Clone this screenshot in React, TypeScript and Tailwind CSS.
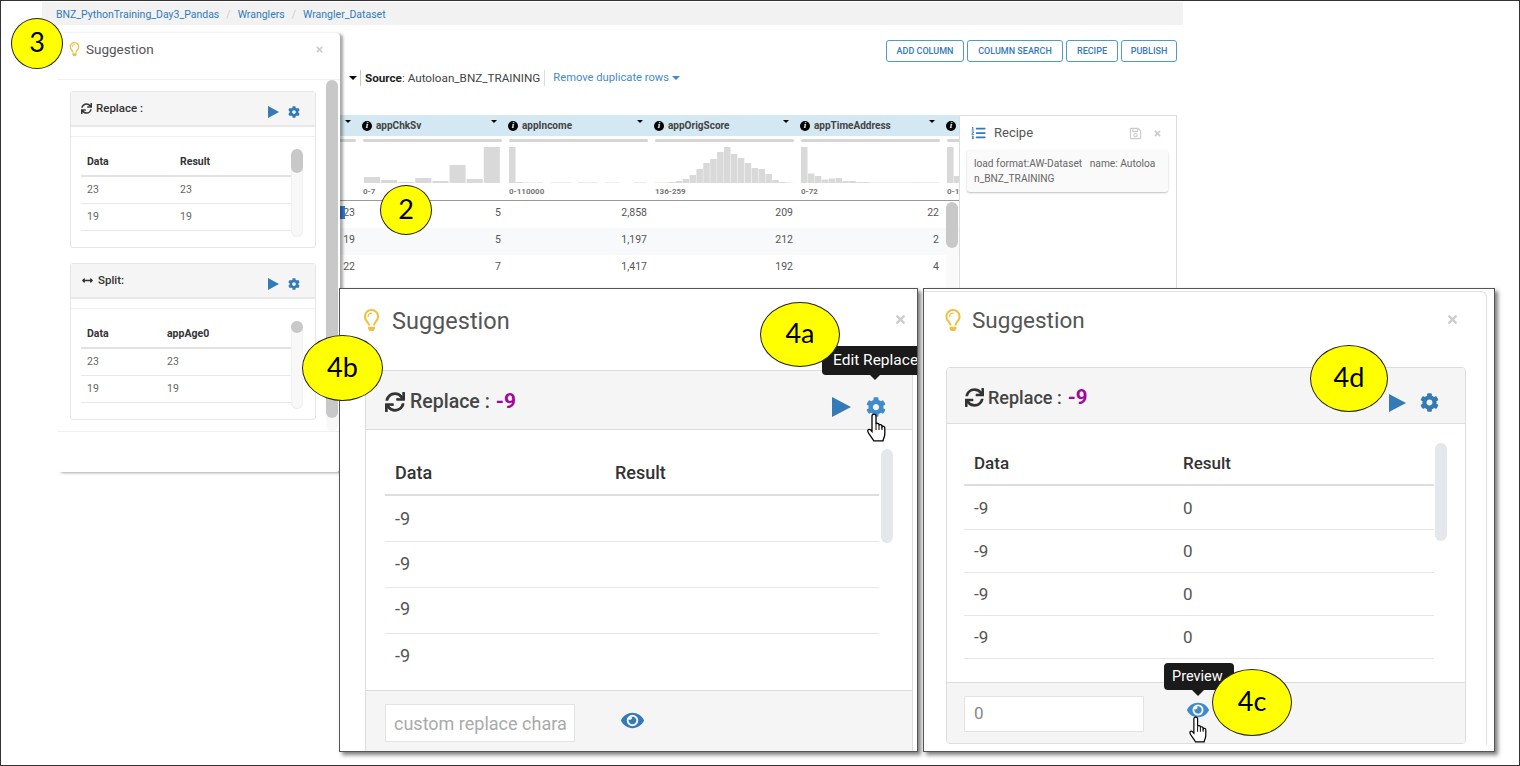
import { FaArrowsAltH, FaCog, FaEye, FaListOl, FaRegLightbulb, FaRegSave, FaSync, FaTimes } from "react-icons/fa"

const columns = [
  { name: "appAge0", range: "", values: ["23", "19", "22"], bars: [] as number[], barWidth: 7 },
  { name: "appChkSv", range: "0-7", values: ["5", "5", "7"], bars: [6, 3, 1, 5, 2, 18, 4, 36], barWidth: 17.1 },
  { name: "appIncome", range: "0-110000", values: ["2,858", "1,197", "1,417"], bars: [36, 1, 0.5, 0.5, 0.5, 0, 0.5, 0.5, 0.5, 0, 0.5, 0.5, 0.5, 0, 0.5, 0.5, 0, 0, 0.5, 0.5], barWidth: 6.9 },
  { name: "appOrigScore", range: "136-259", values: ["209", "212", "192"], bars: [0.5, 0.5, 1, 2, 4, 8, 14, 20, 24, 31, 36, 29, 25, 20, 15, 14, 9, 3, 1, 0.5], barWidth: 6.9 },
  { name: "appTimeAddress", range: "0-72", values: ["22", "2", "4"], bars: [36, 9.5, 7, 3.5, 4.5, 5, 2, 2, 1, 1, 0.5, 0.5, 0.5, 0.5, 0.5, 0.5, 0.5, 0.5, 0.5, 0.5], barWidth: 6.9 },
  { name: "", range: "0-1", values: ["", "", ""], bars: [36, 7], barWidth: 7 },
]

const actions = [
  { label: "ADD COLUMN", width: "w-[78px]" },
  { label: "COLUMN SEARCH", width: "w-[96px]" },
  { label: "RECIPE", width: "w-[52px]" },
  { label: "PUBLISH", width: "w-[56px]" },
]

function Callout({ label, className }: { label: string; className: string }) {
  return (
    <div
      className={`absolute z-30 flex items-center justify-center rounded-[50%] border border-[#222] bg-[#ffff00] pb-[2px] font-['Lato',sans-serif] text-[27px] text-black ${className}`}
    >
      {label}
    </div>
  )
}

function Caret({ className = "" }: { className?: string }) {
  return <span className={`inline-block h-0 w-0 border-x-[3px] border-t-[3px] border-x-transparent border-t-black ${className}`} />
}

function Play({ className }: { className: string }) {
  return (
    <svg viewBox="0 0 18 20" preserveAspectRatio="none" className={className}>
      <polygon points="0,0 18,10 0,20" fill="#337ab7" />
    </svg>
  )
}

function Hand({ className }: { className: string }) {
  return (
    <svg viewBox="0 0 22 29" className={className}>
      <path
        d="M7.5 1.2c1.2 0 2 .9 2 2.1V11c.4-1 2.6-1 3 .2v1c.4-1 2.6-.8 3 .5v1c.5-.9 2.8-.6 2.8 1V21c0 2.800-1.400 4.300-1.800 6.800H7.200C6 25 2 21 1.300 18.300c-.4-1.600 1.300-2.600 2.600-1.500l1.600 1.700V3.300c0-1.200.8-2.100 2-2.100z"
        fill="#fff"
        stroke="#000"
        strokeWidth="1.300"
      />
      <path d="M9.500 11v6M12.500 12v5M15.500 13.500V17" stroke="#000" strokeWidth="1" fill="none" />
    </svg>
  )
}

function Histogram({ bars, barWidth }: { bars: number[]; barWidth: number }) {
  const wide = barWidth > 10
  return (
    <svg width="140" height="37" className="block overflow-visible">
      {bars.map((h, i) => (
        <rect key={i} x={i * barWidth + (wide ? 1 : 0)} y={37 - h} width={barWidth - (wide ? 1 : 0.4)} height={h} fill="#d9d9d9" />
      ))}
    </svg>
  )
}

function AppPage() {
  return (
    <div className="ml-[41px] w-[1141px] pt-px">
      <div className="flex h-[23px] items-center gap-[7px] bg-[#f2f2f2] pt-[2px] pl-[14px] text-[10.500px] text-[#337ab7]">
        <span>BNZ_PythonTraining_Day3_Pandas</span>
        <span className="text-[#ccc]">/</span>
        <span>Wranglers</span>
        <span className="text-[#ccc]">/</span>
        <span>Wrangler_Dataset</span>
      </div>

      <div className="mt-[15px] flex justify-end gap-[3px] pr-[6px]">
        {actions.map((action) => (
          <button
            key={action.label}
            className={`h-[22px] rounded-[3px] border border-[#4f9bc4] pt-[1px] text-[9px] font-medium text-[#337ab7] ${action.width}`}
          >
            {action.label}
          </button>
        ))}
      </div>

      <div className="mt-[8px] flex h-[16px] items-center pl-[307px] text-[11.700px] text-[#444]">
        <Caret className="mr-[3px] border-x-[4px] border-t-[4px]" />
        <span className="border-l border-[#ccc] pl-[4px] leading-[16px]">
          <b className="font-bold text-[#222]">Source</b>: Autoloan_BNZ_TRAINING
        </span>
        <span className="ml-[4px] border-l border-[#ddd] pl-[8px] text-[11.200px] leading-[16px] text-[#428bca]">Remove duplicate rows</span>
        <span className="ml-[3px] inline-block h-0 w-0 border-x-[4px] border-t-[4px] border-x-transparent border-t-[#428bca]" />
      </div>

      <div className="mt-[29px] flex">
        <div className="relative ml-[174px] w-[743px] overflow-hidden">
          <div className="flex h-[21px] w-[876px] bg-[#d3e8f3]">
            {columns.map((col) => (
              <div key={col.range + col.name} className="relative flex w-[146px] shrink-0 items-center text-[10px] font-bold text-[#444]">
                <span className="mr-[4px] flex h-[10px] w-[10px] items-center justify-center rounded-full bg-black font-['Liberation_Serif',serif] text-[9px] font-bold text-white italic">
                  i
                </span>
                {col.name}
                <Caret className="absolute top-[5px] right-[11px]" />
              </div>
            ))}
          </div>
          <div className="flex h-[65px] w-[876px] border-b border-[#999]">
            {columns.map((col) => (
              <div key={col.range + col.name} className="w-[146px] shrink-0 pt-[3px] pr-[6px] pl-[1px]">
                <div className="h-[3px] rounded-full bg-[#d5d5d5]" />
                <div className="mt-[4px] h-[37px]">
                  <Histogram bars={col.bars} barWidth={col.barWidth} />
                </div>
                <div className="mt-[3px] text-[8px] leading-[12px] font-bold text-[#777]">{col.range}</div>
              </div>
            ))}
          </div>
          {[0, 1, 2].map((row) => (
            <div key={row} className={`flex h-[27px] w-[876px] items-start pt-[5px] text-[10.500px] leading-[14px] text-[#555] ${row === 1 ? "bg-[#f8f9fb]" : ""}`}>
              {columns.map((col) => (
                <div key={col.range + col.name} className="w-[146px] shrink-0 pr-[7px] text-right">
                  {col.values[row]}
                </div>
              ))}
            </div>
          ))}
          <div className="h-[10px]" />
          <div className="absolute top-[91px] left-[124px] h-[13px] w-[5px] bg-[#3a7bd5]" />
          <div className="absolute top-[87px] right-[1px] bottom-0 w-[12px] rounded-full bg-[#fafafa]" />
          <div className="absolute top-[87px] right-[1px] h-[46px] w-[12px] rounded-full bg-[#c8c8c8]" />
        </div>

        <div className="h-[190px] w-[218px] border border-[#ddd] bg-white pr-[8px] pl-[7px]">
          <div className="flex h-[34px] items-center pl-[4px]">
            <FaListOl className="h-[14px] w-[15px] text-[#337ab7]" />
            <span className="ml-[8px] text-[13px] text-[#555]">Recipe</span>
            <FaRegSave className="ml-auto h-[13px] w-[13px] text-[#ccc]" />
            <FaTimes className="mr-[6px] ml-[11px] h-[9px] w-[9px] text-[#ccc]" />
          </div>
          <div className="rounded-[3px] bg-[#fafafa] px-[7px] py-[6px] text-[10.200px] leading-[15px] text-[#666] shadow-[0_1px_2px_rgba(0,0,0,0.25)]">
            load format:AW-Dataset &nbsp; name: Autoloa
            <br />
            n_BNZ_TRAINING
          </div>
        </div>
      </div>
    </div>
  )
}

function MiniCard({
  title,
  icon,
  second,
  secondClass,
  thumbClass,
  values,
}: {
  title: string
  icon: React.ReactNode
  second: string
  secondClass: string
  thumbClass: string
  values: string[]
}) {
  return (
    <div className="relative h-[157px] rounded-[3px] border border-[#e6e6e6]">
      <div className="flex h-[35px] items-center border-b-2 border-[#e8e8e8] bg-[#f5f5f5] pl-[10px] text-[11.500px] font-medium text-[#333]">
        <span className="flex items-center">
          {icon}
          <span className="ml-[4px]">{title}</span>
        </span>
        <Play className="mt-[6px] ml-auto h-[12px] w-[11px]" />
        <FaCog className="mt-[6px] mr-[15px] ml-[9px] h-[12px] w-[12px] text-[#337ab7]" />
      </div>
      <div className="h-[10px] border-b border-[#f0f0f0]" />
      <div className="ml-[10px] w-[210px] pt-[12px] text-[10.500px]">
        <div className="flex h-[28px] items-center border-b-2 border-[#e2e2e2] pl-[6px] font-bold text-[#333]">
          <span className={secondClass}>Data</span>
          <span>{second}</span>
        </div>
        {values.map((v) => (
          <div key={v} className="flex h-[27px] items-center border-b border-[#e8e8e8] pl-[6px] text-[#666]">
            <span className={secondClass}>{v}</span>
            <span>{v}</span>
          </div>
        ))}
      </div>
      <div className="absolute top-[57px] left-[220px] h-[88px] w-[12px] rounded-full bg-[#f8f8f8] shadow-[inset_0_0_2px_rgba(0,0,0,0.1)]" />
      <div className={`absolute top-[57px] left-[220px] w-[12px] rounded-full bg-[#c8c8c8] ${thumbClass}`} />
    </div>
  )
}

function SidePanel() {
  return (
    <div className="absolute top-[32px] left-[56px] z-10 h-[439px] w-[283px] rounded-[4px] bg-white shadow-[3px_1px_3px_rgba(0,0,0,0.35)]">
      <div className="flex h-[47px] items-center border-b border-[#f0f0f0] pb-[14px] pl-[12px]">
        <FaRegLightbulb className="h-[14px] w-[11px] text-[#f0c040]" />
        <span className="ml-[6px] text-[13.500px] text-[#555]">Suggestion</span>
        <FaTimes className="mr-[16px] ml-auto h-[9px] w-[9px] text-[#ccc]" />
      </div>
      <div className="relative h-[352px] border-b border-[#f0f0f0] pt-[11px] pl-[13px]">
        <div className="flex w-[246px] flex-col gap-[15px]">
          <MiniCard title="Replace :" icon={<FaSync className="h-[11px] w-[11px]" />} second="Result" secondClass="w-[93px]" thumbClass="h-[24px]" values={["23", "19"]} />
          <MiniCard title="Split:" icon={<FaArrowsAltH className="h-[11px] w-[13px]" />} second="appAge0" secondClass="w-[80px]" thumbClass="h-[12px]" values={["23", "19"]} />
        </div>
        <div className="absolute top-0 left-[269px] h-[351px] w-[12px] rounded-full bg-[#f8f8f8]" />
        <div className="absolute top-0 left-[269px] h-[338px] w-[12px] rounded-full bg-[#c8c8c8]" />
      </div>
    </div>
  )
}

function Tooltip({ text, className, textClass }: { text: string; className: string; textClass: string }) {
  return (
    <div className={`absolute z-20 flex items-center rounded-[4px] bg-[#1a1a1a] text-white ${className}`}>
      <span className={`whitespace-nowrap ${textClass}`}>{text}</span>
    </div>
  )
}

function EditWindow() {
  return (
    <div className="absolute top-[287px] left-[338px] z-20 h-[464px] w-[579px] overflow-hidden border border-[#555] bg-white shadow-[3px_3px_4px_rgba(0,0,0,0.5)]">
      <div className="flex h-[81px] items-start pl-[23px]">
        <FaRegLightbulb className="mt-[20px] h-[22px] w-[17px] text-[#f0c040]" />
        <span className="mt-[17px] ml-[12px] text-[23.500px] leading-[30px] text-[#555]">Suggestion</span>
        <FaTimes className="mt-[24px] mr-[10px] ml-auto h-[13px] w-[13px] text-[#ccc]" />
      </div>
      <div className="relative ml-[25px] w-[548px] border-x border-t border-[#ddd]">
        <div className="flex h-[59px] items-center border-b border-[#ddd] bg-[#f5f5f5] pl-[19px] text-[19.500px] font-medium text-[#444]">
          <span className="mt-[4px] flex items-center">
            <FaSync className="h-[20px] w-[20px] text-[#333]" />
            <span className="ml-[5px]">Replace :</span>
            <span className="ml-[6px] text-[21px] font-bold text-[#a0089a]">-9</span>
          </span>
          <Play className="mt-[14px] ml-auto h-[20px] w-[19px]" />
          <FaCog className="mt-[14px] mr-[26px] ml-[15px] h-[20px] w-[20px] text-[#428bca]" />
        </div>
        <div className="h-[260px] pt-[22px] pl-[19px]">
          <div className="w-[494px] text-[18px] text-[#555]">
            <div className="flex h-[44px] items-center border-b-2 border-[#ddd] pb-[2px] pl-[10px] font-medium text-[#333]">
              <span className="w-[220px]">Data</span>
              <span>Result</span>
            </div>
            <div className="flex h-[46px] items-center border-b border-[#e6e6e6] pl-[10px]">-9</div>
            <div className="flex h-[46px] items-center border-b border-[#e6e6e6] pb-[2px] pl-[10px]">-9</div>
            <div className="flex h-[46px] items-center border-b border-[#e6e6e6] pb-[4px] pl-[10px]">-9</div>
            <div className="flex h-[46px] items-center pb-[4px] pl-[10px]">-9</div>
          </div>
          <div className="absolute top-[78px] left-[515px] h-[94px] w-[12px] rounded-full bg-[#e4e7ec]" />
        </div>
        <div className="flex h-[70px] items-start border-t border-[#ddd] bg-[#f5f5f5] pt-[13px] pl-[19px]">
          <div className="flex h-[38px] w-[190px] items-center border border-[#e3e3e3] bg-white pl-[8px] text-[18px] whitespace-nowrap text-[#aaa]">
            custom replace chara
          </div>
          <FaEye className="mt-[6px] ml-[46px] h-[21px] w-[23px] text-[#337ab7]" />
        </div>
      </div>
      <Tooltip text="Edit Replace" className="top-[57px] left-[482px] h-[29px] w-[100px] pl-[11px]" textClass="text-[15.500px]" />
      <div className="absolute top-[85px] left-[529px] z-20 h-0 w-0 border-x-[6px] border-t-[6px] border-x-transparent border-t-[#1a1a1a]" />
      <Hand className="absolute top-[124px] left-[526px] z-20 h-[29px] w-[23px]" />
    </div>
  )
}

function PreviewWindow() {
  return (
    <div className="absolute top-[287px] left-[922px] z-20 h-[464px] w-[572px] overflow-hidden border border-[#555] bg-white shadow-[3px_3px_4px_rgba(0,0,0,0.5)]">
      <div className="mt-[2px] h-[454px] w-[563px] rounded-tr-[6px] border-t border-r border-[#e0e0e0]">
        <div className="flex h-[75px] items-start pl-[21px]">
          <FaRegLightbulb className="mt-[17px] h-[22px] w-[16px] text-[#f0c040]" />
          <span className="mt-[13px] ml-[11px] text-[22.500px] leading-[30px] text-[#555]">Suggestion</span>
          <FaTimes className="mt-[21px] mr-[27px] ml-auto h-[13px] w-[13px] text-[#ccc]" />
        </div>
        <div className="relative ml-[22px] w-[520px] overflow-hidden rounded-[4px] border border-[#ddd]">
          <div className="flex h-[56px] items-center border-b border-[#ddd] bg-[#f5f5f5] pl-[18px] text-[18px] font-medium text-[#444]">
            <span className="mt-[4px] flex items-center">
              <FaSync className="h-[19px] w-[19px] text-[#333]" />
              <span className="ml-[4px]">Replace :</span>
              <span className="ml-[6px] text-[20.500px] font-bold text-[#a0089a]">-9</span>
            </span>
            <Play className="mt-[14px] ml-auto h-[18px] w-[17px]" />
            <FaCog className="mt-[14px] mr-[26px] ml-[14px] h-[19px] w-[19px] text-[#337ab7]" />
          </div>
          <div className="h-[258px] pt-[19px] pl-[17px]">
            <div className="w-[470px] text-[17px] text-[#555]">
              <div className="flex h-[43px] items-center border-b-2 border-[#ddd] pt-[1px] pl-[10px] font-medium text-[#333]">
                <span className="w-[209px]">Data</span>
                <span>Result</span>
              </div>
              {[44, 43, 43, 43].map((h, i) => (
                <div key={i} className={`flex items-center border-b border-[#e6e6e6] pt-[2px] pl-[10px] ${h === 44 ? "h-[44px]" : "h-[43px]"}`}>
                  <span className="w-[209px]">-9</span>
                  <span>0</span>
                </div>
              ))}
            </div>
            <div className="absolute top-[75px] left-[488px] h-[98px] w-[12px] rounded-full bg-[#e4e7ec]" />
          </div>
          <div className="flex h-[61px] items-start border-t border-[#ddd] bg-[#f5f5f5] pt-[13px] pl-[17px]">
            <div className="flex h-[36px] w-[180px] items-center border border-[#e3e3e3] bg-white pl-[9px] text-[17px] text-[#888]">0</div>
            <FaEye className="mt-[4px] ml-[43px] h-[20px] w-[22px] text-[#428bca]" />
          </div>
        </div>
      </div>
      <Tooltip text="Preview" className="top-[374px] left-[240px] h-[27px] w-[70px] pl-[8px]" textClass="text-[14.500px]" />
      <div className="absolute top-[401px] left-[268px] z-20 h-0 w-0 border-x-[6px] border-t-[6px] border-x-transparent border-t-[#1a1a1a]" />
      <Hand className="absolute top-[427px] left-[264px] z-20 h-[27px] w-[22px]" />
    </div>
  )
}

export default function App() {
  return (
    <div className="relative h-[766px] w-[1520px] overflow-hidden border border-[#333] bg-white font-['Roboto',sans-serif]">
      <AppPage />
      <SidePanel />
      <EditWindow />
      <PreviewWindow />
      <Callout label="3" className="top-[17px] left-[10px] h-[51px] w-[52px]" />
      <Callout label="2" className="top-[184px] left-[379px] h-[50px] w-[52px]" />
      <Callout label="4a" className="top-[301px] left-[759px] h-[65px] w-[80px]" />
      <Callout label="4b" className="top-[334px] left-[301px] h-[66px] w-[81px]" />
      <Callout label="4d" className="top-[344px] left-[1309px] h-[67px] w-[78px]" />
      <Callout label="4c" className="top-[668px] left-[1211px] h-[67px] w-[80px]" />
    </div>
  )
}
